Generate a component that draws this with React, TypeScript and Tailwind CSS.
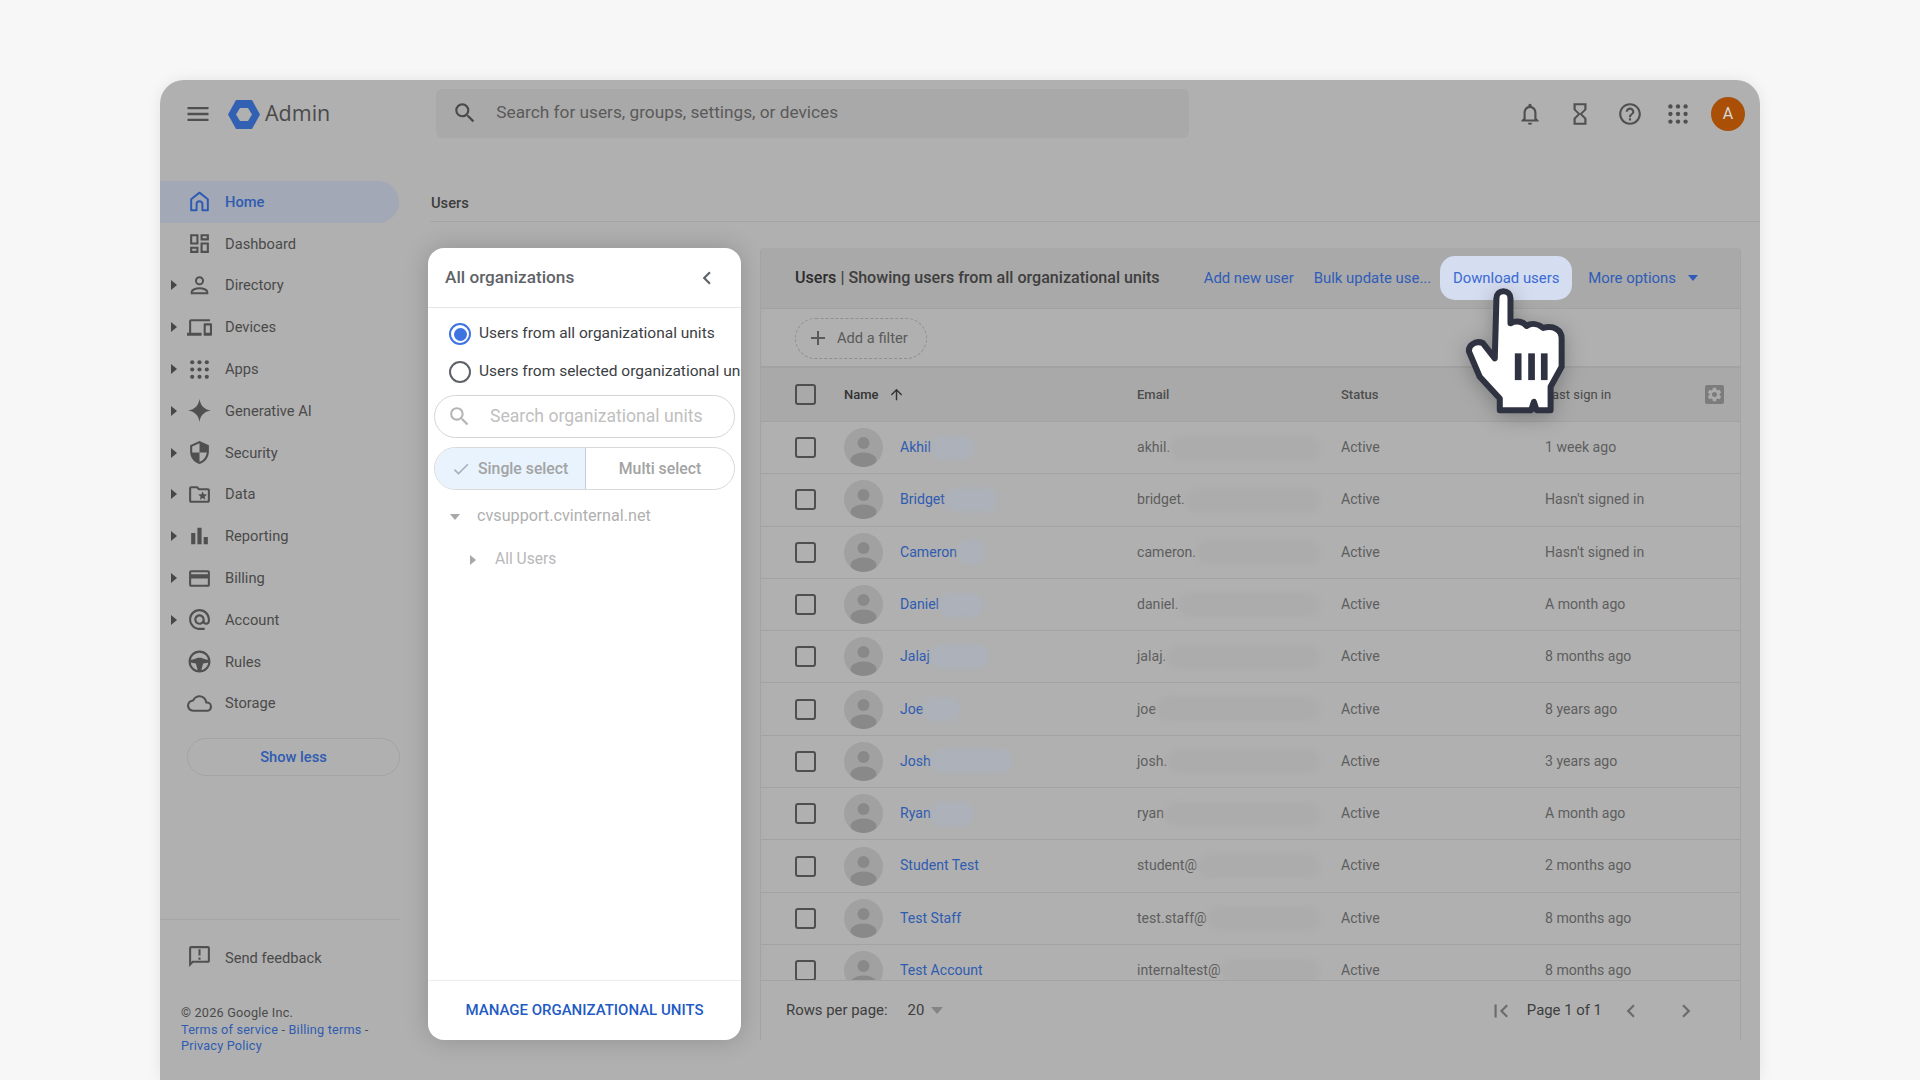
import React from "react";
import {
  MdMenu,
  MdSearch,
  MdOutlineNotifications,
  MdOutlineHourglassEmpty,
  MdHelpOutline,
  MdOutlineDashboard,
  MdOutlineDevices,
  MdSecurity,
  MdOutlineFolderSpecial,
  MdBarChart,
  MdOutlineCreditCard,
  MdAlternateEmail,
  MdOutlineCloud,
  MdOutlineAnnouncement,
  MdChevronLeft,
  MdChevronRight,
  MdFirstPage,
  MdCheck,
  MdAdd,
  MdArrowUpward,
  MdSettings,
} from "react-icons/md";

const Dots = ({ size = 25 }: { size?: number }) => (
  <svg width={size} height={size} viewBox="0 0 24 24" fill="currentColor">
    {[5, 12, 19].map((y) =>
      [5, 12, 19].map((x) => <circle key={`${x}-${y}`} cx={x} cy={y} r="2" />)
    )}
  </svg>
);

const HomeIcon = () => (
  <svg width="25" height="25" viewBox="0 0 24 24" fill="none" stroke="currentColor" strokeWidth="1.9" strokeLinejoin="round">
    <path d="M4 20.500V9.800L12 3.500l8 6.300v10.700h-5.200v-6a2.800 2.800 0 00-5.600 0v6z" />
  </svg>
);

const PersonIcon = () => (
  <svg width="25" height="25" viewBox="0 0 24 24" fill="none" stroke="currentColor" strokeWidth="1.9">
    <circle cx="12" cy="7.500" r="3.400" />
    <path d="M4.500 19.500v-1.300c0-2.200 4.200-3.600 7.500-3.600s7.500 1.400 7.500 3.600v1.300z" />
  </svg>
);

const SparkIcon = () => (
  <svg width="25" height="25" viewBox="0 0 24 24" fill="currentColor">
    <path d="M12 1c.9 6.200 4.300 10 11 11-6.700 1-10.100 4.800-11 11-.9-6.200-4.300-10-11-11 6.700-1 10.100-4.800 11-11z" />
  </svg>
);

const WheelIcon = () => (
  <svg width="25" height="25" viewBox="0 0 24 24">
    <circle cx="12" cy="12" r="9.500" fill="none" stroke="currentColor" strokeWidth="2" />
    <path d="M3 10.500c4 0 5.500-2 9-2s5 2 9 2v2.500l-5.500 1-2 7h-3l-2-7L3 13z" fill="currentColor" />
  </svg>
);

const Caret = ({ className }: { className: string }) => (
  <svg className={className} width="6" height="10" viewBox="0 0 6 10" fill="currentColor">
    <path d="M0 0l6 5-6 5z" />
  </svg>
);

const navItems = [
  { label: "Home", icon: <HomeIcon />, active: true },
  { label: "Dashboard", icon: <MdOutlineDashboard size={25} /> },
  { label: "Directory", icon: <PersonIcon />, caret: true },
  { label: "Devices", icon: <MdOutlineDevices size={25} />, caret: true },
  { label: "Apps", icon: <Dots />, caret: true },
  { label: "Generative AI", icon: <SparkIcon />, caret: true },
  { label: "Security", icon: <MdSecurity size={25} />, caret: true },
  { label: "Data", icon: <MdOutlineFolderSpecial size={25} />, caret: true },
  { label: "Reporting", icon: <MdBarChart size={26} />, caret: true },
  { label: "Billing", icon: <MdOutlineCreditCard size={25} />, caret: true },
  { label: "Account", icon: <MdAlternateEmail size={25} />, caret: true },
  { label: "Rules", icon: <WheelIcon /> },
  { label: "Storage", icon: <MdOutlineCloud size={25} /> },
];

const users = [
  { name: "Akhil", nameBlur: "w-[44px]", email: "akhil.", status: "1 week ago" },
  { name: "Bridget", nameBlur: "w-[52px]", email: "bridget.", status: "Hasn't signed in" },
  { name: "Cameron", nameBlur: "w-[28px]", email: "cameron.", status: "Hasn't signed in" },
  { name: "Daniel", nameBlur: "w-[44px]", email: "daniel.", status: "A month ago" },
  { name: "Jalaj", nameBlur: "w-[59px]", email: "jalaj.", status: "8 months ago" },
  { name: "Joe", nameBlur: "w-[37px]", email: "joe", status: "8 years ago" },
  { name: "Josh", nameBlur: "w-[81px]", email: "josh.", status: "3 years ago" },
  { name: "Ryan", nameBlur: "w-[43px]", email: "ryan", status: "A month ago" },
  { name: "Student Test", email: "student@", status: "2 months ago" },
  { name: "Test Staff", email: "test.staff@", status: "8 months ago" },
  { name: "Test Account", email: "internaltest@", status: "8 months ago" },
];

const Checkbox = () => (
  <div className="w-[21px] h-[21px] rounded-[3px] border-2 border-[#4f4f4f]" />
);

const Avatar = () => (
  <svg width="39" height="39" viewBox="0 0 39 39" className="shrink-0">
    <clipPath id="av">
      <circle cx="19.500" cy="19.500" r="19.500" />
    </clipPath>
    <circle cx="19.500" cy="19.500" r="19.500" fill="#a1a1a1" />
    <g clipPath="url(#av)" fill="#898989">
      <circle cx="19.500" cy="15" r="6" />
      <ellipse cx="19.500" cy="32" rx="13" ry="7.500" />
    </g>
  </svg>
);

const Sidebar = () => (
  <aside className="w-[268px] shrink-0 flex flex-col pt-[33px]">
    {navItems.map((item) => (
      <div
        key={item.label}
        className={`relative flex items-center h-[41.8px] w-[239px] rounded-r-full pl-[27px] ${
          item.active ? "bg-[#a2a8b5] text-[#2f5cb0] font-medium" : "text-[#4a4a4a]"
        }`}
      >
        {item.caret && <Caret className="absolute left-[11px] text-[#474747]" />}
        <span className={`w-[25px] flex justify-center ${item.active ? "" : "text-[#505050]"}`}>{item.icon}</span>
        <span className="ml-[13px] text-[14.7px]">{item.label}</span>
      </div>
    ))}
    <div className="mt-[14px] ml-[27px] w-[213px] h-[38px] rounded-full border border-[#a4a4a4] flex items-center justify-center text-[14.7px] font-medium text-[#2f5cb0]">
      Show less
    </div>
    <div className="mt-[143px] w-[240px] border-t border-[#a6a6a6]" />
    <div className="flex items-center h-[76px] pl-[27px] text-[#4a4a4a]">
      <MdOutlineAnnouncement size={25} className="text-[#505050] -translate-y-[2px]" />
      <span className="ml-[13px] text-[14.7px]">Send feedback</span>
    </div>
    <div className="pl-[21px] pt-[9px] text-[12.700px] leading-[16.500px] tracking-[0.2px] text-[#4a4a4a]">
      <p>© 2026 Google Inc.</p>
      <p className="text-[#2f5cb0]">
        Terms of service <span className="text-[#4a4a4a]">-</span> Billing terms <span className="text-[#4a4a4a]">-</span>
      </p>
      <p className="text-[#2f5cb0]">Privacy Policy</p>
    </div>
  </aside>
);

const OrgPanel = () => (
  <div className="w-[313px] h-[792px] bg-white rounded-[16px] shadow-[0_0_24px_rgba(0,0,0,0.18)] flex flex-col overflow-hidden shrink-0">
    <div className="h-[60px] shrink-0 flex items-center justify-between pl-[17px] pr-[21px] border-b border-[#e6e6e6]">
      <span className="text-[17.200px] font-medium text-[#5f6368]">All organizations</span>
      <MdChevronLeft size={26} className="text-[#5f6368]" />
    </div>
    <div className="pt-[7px] flex flex-col">
      <label className="flex items-center h-[38px] pl-[21px] text-[15.500px] text-[#3c4043] whitespace-nowrap">
        <span className="w-[22px] h-[22px] rounded-full border-2 border-[#3f73e0] flex items-center justify-center mr-[8px] shrink-0">
          <span className="w-[13px] h-[13px] rounded-full bg-[#3f73e0]" />
        </span>
        Users from all organizational units
      </label>
      <label className="flex items-center h-[38px] pl-[21px] text-[15.500px] text-[#3c4043] whitespace-nowrap">
        <span className="w-[22px] h-[22px] rounded-full border-2 border-[#5f6368] mr-[8px] shrink-0" />
        Users from selected organizational units
      </label>
    </div>
    <div className="mx-[6px] mt-[4px] h-[43px] rounded-full border border-[#d4d4d4] flex items-center pl-[12px] text-[#c0c0c0]">
      <MdSearch size={25} className="text-[#b4b4b4]" />
      <span className="ml-[18px] text-[17.600px] whitespace-nowrap">Search organizational units</span>
    </div>
    <div className="mx-[6px] mt-[9px] h-[43px] rounded-full border border-[#d8d8d8] flex overflow-hidden text-[15.800px] font-medium text-[#a3a3a3]">
      <div className="w-[151px] bg-[#e8f3fd] border-r border-[#c4ccd4] flex items-center pl-[16px] gap-[7px]">
        <MdCheck size={20} className="text-[#a8b0b8]" />
        Single select
      </div>
      <div className="flex-1 flex items-center justify-center">Multi select</div>
    </div>
    <div className="flex items-center h-[43px] mt-[5px] pl-[24px] text-[16.200px] text-[#b0b0b0]">
      <Caret className="rotate-90 text-[#a8a8a8] mr-[19px]" />
      cvsupport.cvinternal.net
    </div>
    <div className="flex items-center h-[43px] pl-[42px] text-[15.600px] text-[#b8b8b8]">
      <Caret className="text-[#a8a8a8] mr-[19px]" />
      All Users
    </div>
    <div className="mt-auto h-[60px] border-t border-[#ededed] flex items-center justify-center text-[15px] font-medium text-[#1f5bc4]">
      MANAGE ORGANIZATIONAL UNITS
    </div>
  </div>
);

const UsersTable = () => (
  <div className="w-[981px] h-[792px] border-x border-[#a3a3a3] flex flex-col text-[14.100px] shrink-0 rounded-t-[4px] overflow-hidden">
    <div className="h-[61px] shrink-0 bg-[#a9a9a9] border-b border-[#a2a2a2] flex items-center pl-[34px] whitespace-nowrap text-[14.900px]">
      <span className="text-[16.100px] font-medium text-[#3e3e3e]">
        <span className="text-[#2d2d2d]">Users</span> | Showing users from all organizational units
      </span>
      <span className="ml-[44px] text-[#2f5cb8]">Add new user</span>
      <span className="ml-[20px] text-[#2f5cb8]">Bulk update use...</span>
      <span className="ml-[9px] h-[44px] w-[132px] rounded-[15px] bg-[#d5ddf0] text-[#3a6ad4] flex items-center justify-center">
        Download users
      </span>
      <span className="ml-[16px] text-[#2f5cb8]">More options</span>
      <span className="ml-[12px] w-0 h-0 border-x-[5px] border-x-transparent border-t-[6px] border-t-[#2f5cb8]" />
    </div>
    <div className="h-[59px] shrink-0 flex items-center pl-[34px] pt-[1px] border-b-2 border-[#a2a2a2]">
      <div className="w-[132px] h-[41px] rounded-full border border-dashed border-[#8f8f8f] flex items-center pl-[10px] text-[14.700px] text-[#5a5a5a]">
        <MdAdd size={24} className="text-[#5a5a5a]" />
        <span className="ml-[7px]">Add a filter</span>
      </div>
    </div>
    <div className="h-[54px] shrink-0 bg-[#a9a9a9] border-b border-[#a2a2a2] grid grid-cols-[83px_293px_204px_204px_1fr] items-center text-[13px] font-medium text-[#4d4d4d]">
      <div className="pl-[34px]">
        <Checkbox />
      </div>
      <div className="flex items-center text-[#333333]">
        Name
        <MdArrowUpward size={17} className="ml-[9px]" />
      </div>
      <div>Email</div>
      <div>Status</div>
      <div className="flex items-center justify-between pr-[16px] font-normal text-[#4a4a4a]">
        Last sign in
        <span className="w-[19px] h-[19px] rounded-[2px] bg-[#7c7c7c] flex items-center justify-center">
          <MdSettings size={17} className="text-[#ababab]" />
        </span>
      </div>
    </div>
    <div className="flex-1 overflow-hidden">
      {users.map((u) => (
        <div
          key={u.name}
          className="h-[52.3px] border-b border-[#a3a3a3] grid grid-cols-[83px_293px_204px_204px_1fr] items-center text-[#5e5e5e]"
        >
          <div className="pl-[34px]">
            <Checkbox />
          </div>
          <div className="flex items-center">
            <Avatar />
            <span className="ml-[17px] text-[#2f5cb0]">{u.name}</span>
            {u.nameBlur && <span className={`${u.nameBlur} h-[24px] rounded-full bg-[#acb1ba] blur-[2px]`} />}
          </div>
          <div className="flex items-center w-[183px]">
            <span>{u.email}</span>
            <span className="flex-1 h-[24px] rounded-full bg-[#acacac] blur-[2px]" />
          </div>
          <div>Active</div>
          <div>{u.status}</div>
        </div>
      ))}
    </div>
    <div className="h-[60px] shrink-0 border-t border-[#a3a3a3] bg-[#b0b0b0] flex items-center pl-[25px] pr-[41px] text-[14.900px] text-[#3d3d3d]">
      Rows per page:
      <span className="ml-[20px]">20</span>
      <span className="ml-[7px] w-0 h-0 border-x-[6px] border-x-transparent border-t-[7px] border-t-[#858585]" />
      <MdFirstPage size={26} className="ml-auto text-[#6b6b6b]" />
      <span className="ml-[13px]">Page 1 of 1</span>
      <MdChevronLeft size={26} className="ml-[16px] text-[#6b6b6b]" />
      <MdChevronRight size={26} className="ml-[29px] text-[#6b6b6b]" />
    </div>
  </div>
);

const HandCursor = () => (
  <svg
    className="absolute left-[1463.300px] top-[283.300px] drop-shadow-[0_4px_10px_rgba(0,0,0,0.25)]"
    width="107"
    height="134"
    viewBox="0 0 320 400"
  >
    <path
      d="M100 45A21 21 0 01142 45L142 120C160 110 180 115 190 128C205 118 225 122 240 134C270 125 295 140 295 165L295 250L262 310L262 380L220 380L212 355L204 380L110 380L110 345L50 280L18 205C15 185 40 170 60 180L95 225Z"
      fill="#ffffff"
      stroke="#2f3341"
      strokeWidth="18"
      strokeLinejoin="round"
    />
    <rect x="155" y="210" width="20" height="80" fill="#2f3341" />
    <rect x="195" y="210" width="20" height="80" fill="#2f3341" />
    <rect x="233" y="210" width="20" height="80" fill="#2f3341" />
  </svg>
);

const App = () => {
  return (
    <div
      className="relative w-[1920px] h-[1080px] overflow-hidden bg-[#f7f7f7] pt-[80px] pl-[160px]"
      style={{ fontFamily: "Roboto, sans-serif" }}
    >
      <div className="w-[1600px] h-[1000px] bg-[#b0b0b0] rounded-t-[24px] shadow-[0_0_14px_rgba(0,0,0,0.08)] flex flex-col overflow-hidden">
        <header className="h-[68px] shrink-0 flex items-center text-[#505050]">
          <MdMenu size={28} className="ml-[24px]" />
          <svg className="ml-[16px]" width="32" height="29" viewBox="0 0 32 29">
            <path d="M8 0h16l8 14.500L24 29H8L0 14.500z" fill="#3260b3" />
            <path d="M12 8h8l4 6.500-4 6.500h-8l-4-6.500z" fill="#b0b0b0" />
          </svg>
          <span className="ml-[5px] mb-[2px] text-[21.500px] text-[#4a4a4a]" style={{ fontFamily: "'Open Sans', sans-serif" }}>
            Admin
          </span>
          <div className="ml-[106px] mb-[2px] w-[753px] h-[49px] rounded-[6px] bg-[#a9a9a9] flex items-center pl-[16px]">
            <MdSearch size={26} className="text-[#4a4a4a]" />
            <span className="ml-[18px] text-[17.250px] text-[#5a5a5a]">Search for users, groups, settings, or devices</span>
          </div>
          <div className="ml-auto flex items-center pr-[15px] text-[#505050]">
            <MdOutlineNotifications size={26} />
            <MdOutlineHourglassEmpty size={26} className="ml-[24px]" />
            <MdHelpOutline size={26} className="ml-[24px]" />
            <span className="ml-[22px]">
              <Dots size={26} />
            </span>
            <div className="ml-[20px] w-[34px] h-[34px] rounded-full bg-[#a94f06] flex items-center justify-center text-[16px] text-[#d9d9d9]">
              A
            </div>
          </div>
        </header>
        <div className="flex-1 flex min-h-0">
          <Sidebar />
          <main className="flex-1 flex flex-col pt-[33px]">
            <div className="h-[41px] ml-[2px] pt-[4px] flex items-center border-b border-[#a4a4a4] text-[14.7px] font-medium text-[#3d3d3d]">
              <span className="-ml-[1px] pl-[2px]">Users</span>
            </div>
            <div className="flex gap-[19px] pt-[26px]">
              <OrgPanel />
              <UsersTable />
            </div>
          </main>
        </div>
      </div>
      <HandCursor />
    </div>
  );
};

export default App;
